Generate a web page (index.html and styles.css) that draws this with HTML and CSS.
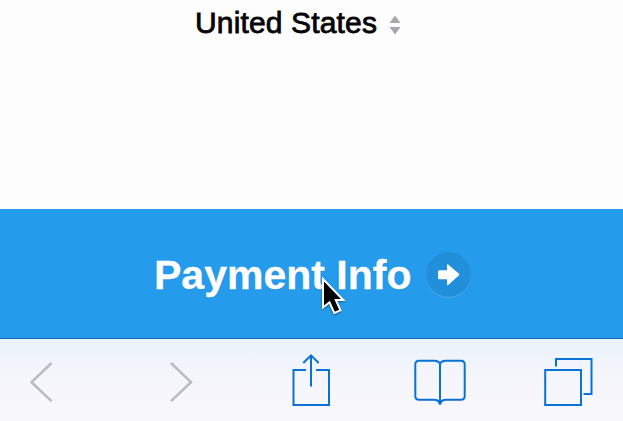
FILE: index.html
```html
<!DOCTYPE html>
<html lang="en">
<head>
<meta charset="utf-8">
<title>Checkout</title>
<link rel="stylesheet" href="styles.css">
</head>
<body>
<main class="screen">
  <section class="country">
    <span class="country-name">United States</span>
    <svg class="sorter" width="12" height="20" viewBox="0 0 12 20"><path d="M6 0.500 11.500 8H.500ZM6 19.500 11.500 12H.500Z" fill="#a9a6ab"/></svg>
  </section>
  <div class="pay">
    <span class="pay-label">Payment Info</span>
    <span class="pay-badge">
      <svg width="45" height="45" viewBox="0 0 45 45"><path d="M13.500 18.300H21V13.600Q21 11.500 22.500 12.700L33 21.700Q33.800 22.500 33 23.300L22.500 32.800Q21 34 21 32V27.300H13.500Q12 27.300 12 25.800V19.800Q12 18.300 13.500 18.300Z" fill="#fff"/></svg>
    </span>
    <svg class="cursor" width="30" height="42" viewBox="0 0 30 42"><path d="M3 2V30.500L9.500 25.300 14.300 36 20.500 33.300 15.800 23H23.300Z" fill="#000" stroke="#fff" stroke-width="2"/></svg>
  </div>
  <nav class="toolbar">
    <svg class="icon muted" viewBox="0 0 60 82"><path d="M40.500 24 20.500 43.200 40.500 62.200"/></svg>
    <svg class="icon muted" viewBox="0 0 60 82"><path d="M20 24 40 43.200 20 62.200"/></svg>
    <svg class="icon" viewBox="0 0 60 82"><path d="M25 31H12.500V66H48V31H35M30 47.500V17M22.300 24 30 16.300 37.700 24"/></svg>
    <svg class="icon" viewBox="0 0 60 82"><path d="M30 65.500V25Q29 21.700 24 21.700H9Q5.300 21.700 5.300 25.500V57Q5.300 60.800 9 60.800H24Q29 60.800 30 65.500Q31 60.800 36 60.800H51Q54.700 60.800 54.700 57V25.500Q54.700 21.700 51 21.700H36Q31 21.700 30 25"/></svg>
    <svg class="icon" viewBox="0 0 60 82"><path d="M7.200 31H43V66H7.200ZM18 27.500V20H53.500V55H45.500"/></svg>
  </nav>
</main>
</body>
</html>
```
FILE: styles.css
```css
body {
  margin: 0;
  font-family: "Liberation Sans", Arial, sans-serif;
}
.screen {
  display: grid;
  grid-template-rows: 209px 130px 82px;
  width: 623px;
  height: 421px;
  overflow: hidden;
  background: #fefdfe;
}
.country {
  display: flex;
  align-items: flex-start;
  gap: 12px;
  padding: 6px 0 0 195px;
}
.country-name {
  font-size: 30px;
  line-height: 34px;
  letter-spacing: 0.15px;
  color: #050505;
  -webkit-text-stroke: 0.8px #050505;
  white-space: nowrap;
}
.sorter {
  margin-top: 9px;
}
.pay {
  position: relative;
  display: flex;
  box-sizing: border-box;
  align-items: center;
  gap: 15px;
  padding: 2px 0 0 154px;
  background: #259ceb;
  border-bottom: 1px solid #126db7;
}
.pay-label {
  font-size: 41px;
  font-weight: 700;
  line-height: 48px;
  color: #fff;
  white-space: nowrap;
  -webkit-text-stroke: 0.3px #fff;
  text-shadow: 0 1px 1px #1d80c680;
}
.pay-badge {
  width: 45px;
  height: 45px;
  border-radius: 50%;
  background: #228fdb;
  box-shadow: 0 1px 0 #48aaf0;
}
.pay-badge svg {
  display: block;
}
.cursor {
  position: absolute;
  left: 320px;
  top: 68px;
  filter: drop-shadow(0 1px 1px #0006);
}
.toolbar {
  display: grid;
  grid-template-columns: 140px 130px 129px 128px 60px;
  padding-left: 11px;
  background: linear-gradient(#e9f2fa, #f5f6fc 45%, #f8f7fc);
}
.icon {
  width: 60px;
  height: 82px;
  fill: none;
  stroke: #0873d5;
  stroke-width: 2;
}
.muted {
  stroke: #b9bbbf;
  stroke-width: 2.5;
}
```
